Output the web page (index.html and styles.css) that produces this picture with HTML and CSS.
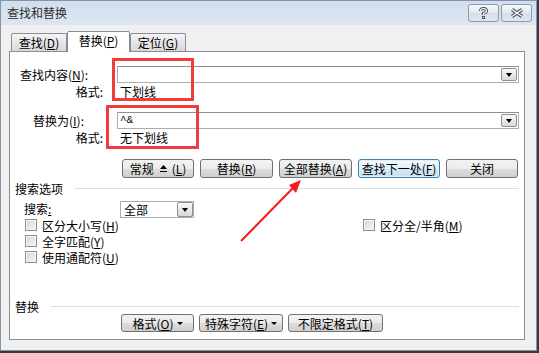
FILE: index.html
```html
<!DOCTYPE html>
<html lang="zh-CN">
<head>
  <meta charset="UTF-8">
  <meta name="viewport" content="width=device-width, initial-scale=1.0">
  <title>查找和替换</title>
  <link rel="stylesheet" href="styles.css">
</head>
<body>
  <div class="window">
    <div class="titlebar">
      <span class="title">查找和替换</span>
      <div class="caption-btns">
        <div class="caption-btn">
          <svg width="9" height="12" viewBox="0 0 9 12">
            <path d="M1.5 4 Q1.5 1.5 4.5 1.5 Q7.5 1.5 7.5 4 Q7.5 5.5 4.5 6.5 L4.5 8" fill="none" stroke="#4b5563" stroke-width="3.2"/>
            <path d="M1.5 4 Q1.5 1.5 4.5 1.5 Q7.5 1.5 7.5 4 Q7.5 5.5 4.5 6.5 L4.5 8" fill="none" stroke="#fff" stroke-width="1.2"/>
            <rect x="3" y="9" width="3" height="3" fill="#4b5563"/>
            <rect x="4" y="10" width="1" height="1" fill="#fff"/>
          </svg>
        </div>
        <div class="caption-btn">
          <svg width="14" height="10" viewBox="0 0 14 10">
            <path d="M2 1.5 L12 8.5 M12 1.5 L2 8.5" stroke="#4b5563" stroke-width="3.4"/>
            <path d="M2 1.5 L12 8.5 M12 1.5 L2 8.5" stroke="#fff" stroke-width="1.3"/>
          </svg>
        </div>
      </div>
    </div>

    <div class="client">
      <div class="tabs">
        <div class="tab">查找(<u>D</u>)</div>
        <div class="tab active">替换(<u>P</u>)</div>
        <div class="tab">定位(<u>G</u>)</div>
      </div>

      <div class="panel">
        <div class="field-row find">
          <span class="field-lbl">查找内容(<u>N</u>):</span>
          <div class="combo">
            <span class="combo-text"></span>
            <span class="drop"><i class="tri"></i></span>
          </div>
        </div>
        <div class="fmt-row">
          <span class="fmt-lbl">格式:</span>
          <span class="fmt-val">下划线</span>
        </div>

        <div class="field-row replace">
          <span class="field-lbl">替换为(<u>I</u>):</span>
          <div class="combo">
            <span class="combo-text">^&amp;</span>
            <span class="drop"><i class="tri"></i></span>
          </div>
        </div>
        <div class="fmt-row">
          <span class="fmt-lbl">格式:</span>
          <span class="fmt-val">无下划线</span>
        </div>

        <div class="btn-row">
          <div class="btn btn-less">常规
            <svg class="less-icon" width="7" height="7" viewBox="0 0 7 7"><path d="M0 4h7L3.5 0z"/><rect y="6" width="7" height="1"/></svg>
            (<u>L</u>)</div>
          <div class="btn btn-replace">替换(<u>R</u>)</div>
          <div class="btn btn-all">全部替换(<u>A</u>)</div>
          <div class="btn btn-next default">查找下一处(<u>F</u>)</div>
          <div class="btn btn-close">关闭</div>
        </div>

        <div class="section">搜索选项</div>

        <div class="search-row">
          <span class="search-lbl">搜索<u>:</u></span>
          <div class="select">
            <span>全部</span>
            <span class="drop tall"><i class="tri"></i></span>
          </div>
        </div>

        <div class="opt-row">
          <div class="check"><span class="box"></span>区分大小写(<u>H</u>)</div>
          <div class="check"><span class="box"></span>区分全/半角(<u>M</u>)</div>
        </div>
        <div class="opt-row">
          <div class="check"><span class="box"></span>全字匹配(<u>Y</u>)</div>
        </div>
        <div class="opt-row">
          <div class="check"><span class="box"></span>使用通配符(<u>U</u>)</div>
        </div>

        <div class="section bottom">替换</div>
        <div class="btn-row small">
          <div class="btn btn-format">格式(<u>O</u>) <i class="tri small-tri"></i></div>
          <div class="btn btn-special">特殊字符(<u>E</u>)<i class="tri small-tri"></i></div>
          <div class="btn btn-noformat">不限定格式(<u>T</u>)</div>
        </div>
      </div>
    </div>
  </div>

  <!-- annotations drawn on top of the dialog -->
  <div class="mark mark-find"></div>
  <div class="mark mark-replace"></div>
  <svg class="arrow" width="539" height="353" viewBox="0 0 539 353">
    <line x1="241" y1="241" x2="293" y2="188" stroke="#f41c1c" stroke-width="2"/>
    <polygon points="301,180 296,193 289,185" fill="#f41c1c"/>
  </svg>
</body>
</html>
```

FILE: styles.css
```css
* { box-sizing: border-box; }
body { margin: 0; position: relative; font-family: "Noto Sans CJK SC", "Noto Sans", sans-serif; font-size: 12px; color: #000; background: #3a3a3a; width: 539px; height: 353px; overflow: hidden; }
u { text-decoration: underline; text-underline-offset: 1px; }

.window { width: 537px; height: 351px; border: 1px solid #8494a8; background: #f0f0f0; display: flex; flex-direction: column; }
.titlebar { height: 24px; flex: none; display: flex; justify-content: space-between; align-items: flex-start; padding: 0 4px 0 6px; background: linear-gradient(#d2deed, #dce6f2); }
.title { line-height: 24px; color: #2b2b2b; }
.caption-btns { display: flex; gap: 2px; margin-top: 3px; }
.caption-btn { width: 31px; height: 18px; border: 1px solid #8b9ab0; border-radius: 3px; background: linear-gradient(#f6f8fb, #e3e9f1 50%, #d5dee9 51%, #dee6ef); display: flex; align-items: center; justify-content: center; }

.client { flex: 1; padding-left: 8px; }
.tabs { display: flex; align-items: flex-end; height: 20px; margin: 6px 0 0 2px; position: relative; z-index: 1; }
.tab { width: 56px; height: 18px; text-align: center; line-height: 17px; border: 1px solid #898c95; border-bottom: none; border-radius: 2px 2px 0 0; background: linear-gradient(#f5f5f5, #e6e6e6 50%, #d9d9d9); }
.tab.active { width: 63px; height: 21px; margin-bottom: -1px; line-height: 18px; background: #fff; }

.panel { width: 516px; height: 289px; background: #fff; border: 1px solid #898c95; display: flex; flex-direction: column; padding: 0 5px 7px 0; }

.field-row { display: flex; height: 17px; margin-top: 14px; }
.field-row.replace { margin-top: 12px; }
.field-lbl { width: 107px; line-height: 17px; padding-left: 10px; }
.replace .field-lbl { padding-left: 23px; }
.combo { width: 402px; height: 17px; border: 1px solid #abadb3; border-top-color: #8e8f8f; display: flex; align-items: center; justify-content: space-between; padding: 0 1px 0 2px; line-height: 15px; }
.combo-text { font-family: "Liberation Mono", monospace; font-size: 11px; }

.drop { width: 16px; height: 13px; border: 1px solid #8f8f8f; border-radius: 2px; background: linear-gradient(#f7f7f7, #e9e9e9 50%, #d9d9d9); display: flex; align-items: center; justify-content: center; }
.drop.tall { height: 15px; }
.tri { width: 0; height: 0; border-left: 3.5px solid transparent; border-right: 3.5px solid transparent; border-top: 4px solid #000; }
.small-tri { border-left-width: 3px; border-right-width: 3px; border-top-width: 3px; margin-left: 3px; }

.fmt-row { display: flex; height: 17px; line-height: 17px; }
.fmt-lbl { width: 107px; text-align: right; padding-right: 14px; }
.fmt-val { padding-left: 3px; }

.btn-row { display: flex; gap: 6px; margin-top: 13px; padding-left: 112px; }
.btn { height: 19px; border: 1px solid #707070; border-radius: 3px; background: linear-gradient(#f3f3f3, #ebebeb 50%, #dddddd 51%, #cfcfcf); display: flex; align-items: center; justify-content: center; line-height: 17px; white-space: nowrap; }
.btn.default { border-color: #3c7fb1; background: linear-gradient(#f4f9fd, #e3f0f9 50%, #d3e8f6 51%, #c6e1f3); box-shadow: inset 0 0 0 1px #dff0fb; }
.btn-less { width: 72px; }
.less-icon { margin: 0 5px 0 6px; }
.btn-replace { width: 73px; }
.btn-all { width: 73px; }
.btn-next { width: 82px; }
.btn-close { width: 72px; }

.section { display: flex; align-items: center; height: 16px; padding-left: 5px; margin-top: 2px; }
.section::after { content: ""; flex: 1; height: 1px; background: #d5dfe5; margin-left: 12px; }
.section.bottom { margin-top: auto; }

.search-row { display: flex; height: 16px; margin-top: 5px; }
.search-lbl { width: 110px; padding-left: 14px; line-height: 16px; }
.select { width: 74px; height: 17px; border: 1px solid #abadb3; display: flex; align-items: center; justify-content: space-between; padding: 0 0 0 3px; line-height: 15px; }

.opt-row { display: flex; align-items: center; height: 16px; padding-left: 15px; }
.check { display: flex; align-items: center; }
.opt-row .check:first-child { width: 338px; }
.box { width: 12px; height: 12px; margin-right: 5px; border: 1px solid #8e8f8f; background: linear-gradient(135deg, #d6d6d6, #f7f7f7); box-shadow: inset 0 0 0 1px #f4f4f4; }

.btn-row.small { margin-top: 0; gap: 5px; padding-left: 111px; }
.btn-row.small .btn { height: 18px; }
.btn-format { width: 73px; }
.btn-special { width: 84px; }
.btn-noformat { width: 95px; }

.mark { position: absolute; border: 3px solid #f23b3b; }
.mark-find { left: 112px; top: 58px; width: 82px; height: 43px; }
.mark-replace { left: 106px; top: 105px; width: 93px; height: 44px; }
.arrow { position: absolute; left: 0; top: 0; pointer-events: none; }
```
